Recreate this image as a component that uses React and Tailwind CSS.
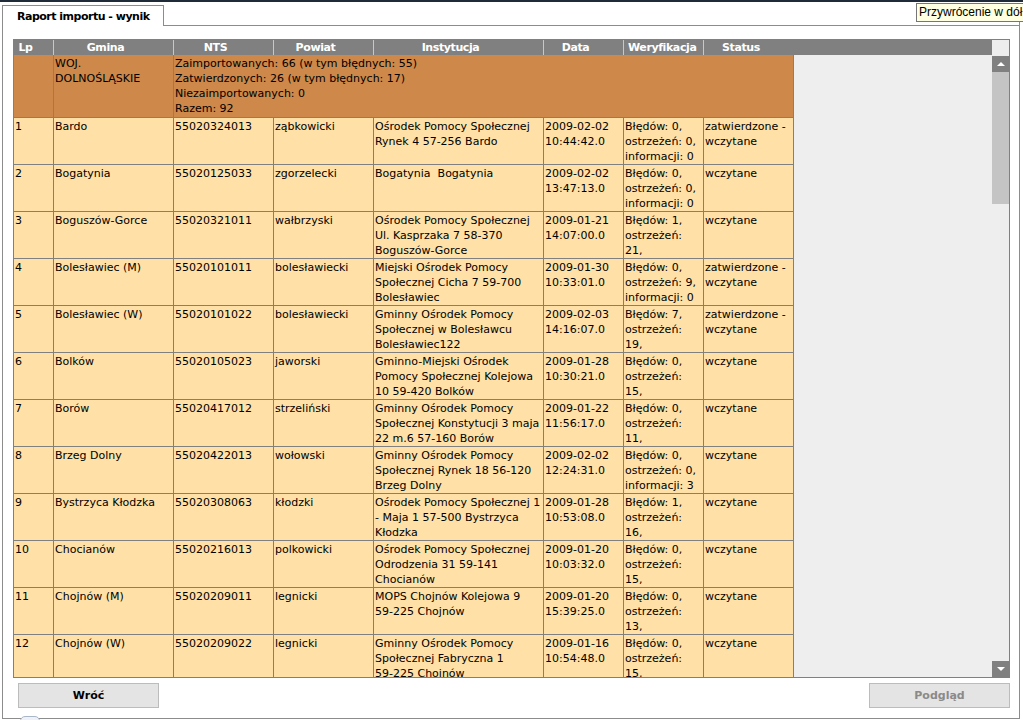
import React from 'react';

const rows = [
    ['1', 'Bardo', '55020324013', 'ząbkowicki', ['Ośrodek Pomocy Społecznej', 'Rynek 4 57-256 Bardo'], ['2009-02-02', '10:44:42.0'], ['Błędów: 0,', 'ostrzeżeń: 0,', 'informacji: 0'], ['zatwierdzone -', 'wczytane']],
    ['2', 'Bogatynia', '55020125033', 'zgorzelecki', ['Bogatynia  Bogatynia'], ['2009-02-02', '13:47:13.0'], ['Błędów: 0,', 'ostrzeżeń: 0,', 'informacji: 0'], ['wczytane']],
    ['3', 'Boguszów-Gorce', '55020321011', 'wałbrzyski', ['Ośrodek Pomocy Społecznej', 'Ul. Kasprzaka 7 58-370', 'Boguszów-Gorce'], ['2009-01-21', '14:07:00.0'], ['Błędów: 1,', 'ostrzeżeń:', '21,'], ['wczytane']],
    ['4', 'Bolesławiec (M)', '55020101011', 'bolesławiecki', ['Miejski Ośrodek Pomocy', 'Społecznej Cicha 7 59-700', 'Bolesławiec'], ['2009-01-30', '10:33:01.0'], ['Błędów: 0,', 'ostrzeżeń: 9,', 'informacji: 0'], ['zatwierdzone -', 'wczytane']],
    ['5', 'Bolesławiec (W)', '55020101022', 'bolesławiecki', ['Gminny Ośrodek Pomocy', 'Społecznej w Bolesławcu', 'Bolesławiec122'], ['2009-02-03', '14:16:07.0'], ['Błędów: 7,', 'ostrzeżeń:', '19,'], ['zatwierdzone -', 'wczytane']],
    ['6', 'Bolków', '55020105023', 'jaworski', ['Gminno-Miejski Ośrodek', 'Pomocy Społecznej Kolejowa', '10 59-420 Bolków'], ['2009-01-28', '10:30:21.0'], ['Błędów: 0,', 'ostrzeżeń:', '15,'], ['wczytane']],
    ['7', 'Borów', '55020417012', 'strzeliński', ['Gminny Ośrodek Pomocy', 'Społecznej Konstytucji 3 maja', '22 m.6 57-160 Borów'], ['2009-01-22', '11:56:17.0'], ['Błędów: 0,', 'ostrzeżeń:', '11,'], ['wczytane']],
    ['8', 'Brzeg Dolny', '55020422013', 'wołowski', ['Gminny Ośrodek Pomocy', 'Społecznej Rynek 18 56-120', 'Brzeg Dolny'], ['2009-02-02', '12:24:31.0'], ['Błędów: 0,', 'ostrzeżeń: 0,', 'informacji: 3'], ['wczytane']],
    ['9', 'Bystrzyca Kłodzka', '55020308063', 'kłodzki', ['Ośrodek Pomocy Społecznej 1', '- Maja 1 57-500 Bystrzyca', 'Kłodzka'], ['2009-01-28', '10:53:08.0'], ['Błędów: 1,', 'ostrzeżeń:', '16,'], ['wczytane']],
    ['10', 'Chocianów', '55020216013', 'polkowicki', ['Ośrodek Pomocy Społecznej', 'Odrodzenia 31 59-141', 'Chocianów'], ['2009-01-20', '10:03:32.0'], ['Błędów: 0,', 'ostrzeżeń:', '15,'], ['wczytane']],
    ['11', 'Chojnów (M)', '55020209011', 'legnicki', ['MOPS Chojnów Kolejowa 9', '59-225 Chojnów'], ['2009-01-20', '15:39:25.0'], ['Błędów: 0,', 'ostrzeżeń:', '13,'], ['wczytane']],
    ['12', 'Chojnów (W)', '55020209022', 'legnicki', ['Gminny Ośrodek Pomocy', 'Społecznej Fabryczna 1', '59-225 Chojnów'], ['2009-01-16', '10:54:48.0'], ['Błędów: 0,', 'ostrzeżeń:', '15,'], ['wczytane']],
];

const headers = ['Lp', 'Gmina', 'NTS', 'Powiat', 'Instytucja', 'Data', 'Weryfikacja', 'Status'];

const cols = 'grid grid-cols-[40px_120px_100px_100px_170px_80px_80px_90px]';

const Cell = ({ children }) => (
    <div className="border-r border-b border-[#808080] pl-px pt-px overflow-hidden whitespace-pre">
        {children}
    </div>
);

const Lines = ({ items }) => items.map((t, i) => <div key={i}>{t}</div>);

const Arrow = ({ down }) => (
    <div className="h-[16px] bg-[#808080] flex items-center justify-center">
        <svg width="8" height="4" viewBox="0 0 8 4">
            <path d={down ? 'M0 0 L8 0 L4 4 Z' : 'M0 4 L4 0 L8 4 Z'} fill="#ffffff" />
        </svg>
    </div>
);

const App = () => {
    return (
        <div className="relative w-[1023px] h-[720px] overflow-hidden bg-white font-['DejaVu_Sans',sans-serif] text-[11px] leading-[15px] text-black">
            <div className="h-[2px] bg-[#1f2b38]" />

            {/* tab strip */}
            <div className="flex items-end pt-[3px] pl-[2px]">
                <div className="w-[162px] h-[21px] border-t border-l border-r border-[#8c8c8c] pl-[14px] pt-[3px] font-bold tracking-[-0.5px] whitespace-nowrap">
                    Raport importu - wynik
                </div>
                <div className="w-[856px] h-[21px] border-b border-r border-[#8c8c8c]" />
            </div>

            {/* panel */}
            <div className="ml-[2px] w-[1018px] h-[693px] border-l border-r border-b border-[#8c8c8c] pl-[10px] pt-[13px]">
                <div className="w-[997px] h-[639px] border border-[#808080] flex overflow-hidden">
                    <div className="w-[978px] flex flex-col bg-[#eeeeee]">
                        <div className="h-[15px] bg-[#808080] flex text-white font-bold tracking-[-0.4px]">
                            <div className={cols}>
                                {headers.map((h, i) => (
                                    <div
                                        key={h}
                                        className={`pl-[4px] pr-[20px] text-center whitespace-nowrap leading-[15px] ${i < 7 ? 'border-r border-[#c8c8c8]' : ''}`}
                                    >
                                        {h}
                                    </div>
                                ))}
                            </div>
                        </div>

                        <div className="flex-1 overflow-hidden">
                            <div className={`${cols} w-[780px] h-[63px] bg-[#cd884a]`}>
                                <Cell />
                                <Cell>
                                    <Lines items={['WOJ.', 'DOLNOŚLĄSKIE']} />
                                </Cell>
                                <div className="col-span-6 border-r border-b border-[#808080] pl-px pt-px whitespace-nowrap">
                                    <div>Zaimportowanych: 66 (w tym błędnych: 55)</div>
                                    <div>Zatwierdzonych: 26 (w tym błędnych: 17)</div>
                                    <div>Niezaimportowanych: 0</div>
                                    <div>Razem: 92</div>
                                </div>
                            </div>
                            {rows.map((r) => (
                                <div key={r[0]} className={`${cols} w-[780px] h-[47px] bg-[#ffe0a6]`}>
                                    <Cell>{r[0]}</Cell>
                                    <Cell>{r[1]}</Cell>
                                    <Cell>{r[2]}</Cell>
                                    <Cell>{r[3]}</Cell>
                                    <Cell><Lines items={r[4]} /></Cell>
                                    <Cell><Lines items={r[5]} /></Cell>
                                    <Cell><Lines items={r[6]} /></Cell>
                                    <Cell><Lines items={r[7]} /></Cell>
                                </div>
                            ))}
                        </div>
                    </div>

                    {/* scrollbar */}
                    <div className="w-[17px] flex flex-col bg-[#eeeeee]">
                        <div className="h-[16px]" />
                        <Arrow />
                        <div className="h-[132px] bg-[#c4c4c4]" />
                        <div className="flex-1" />
                        <Arrow down />
                    </div>
                </div>

                <div className="flex justify-between pl-[5px] pr-[3px] mt-[5px] w-[1000px]">
                    <button className="w-[141px] h-[25px] bg-[#e4e4e4] border border-[#bcbcbc] font-bold text-black">
                        Wróć
                    </button>
                    <button className="w-[141px] h-[25px] bg-[#e4e4e4] border border-[#bcbcbc] font-bold text-[#8a8a8a]">
                        Podgląd
                    </button>
                </div>
            </div>

            {/* tooltip */}
            <div className="absolute top-[3px] left-[916px] h-[19px] pl-[2px] pr-[4px] bg-[#ffffe1] border border-[#767676] font-['Liberation_Sans',sans-serif] text-[12px] leading-[17px] whitespace-nowrap">
                Przywrócenie w dół
            </div>

            <div className="absolute left-[20px] top-[716px] w-[20px] h-[10px] rounded-full border border-[#a9b6c8] bg-[#eef2f8]" />
        </div>
    );
};

export default App;
